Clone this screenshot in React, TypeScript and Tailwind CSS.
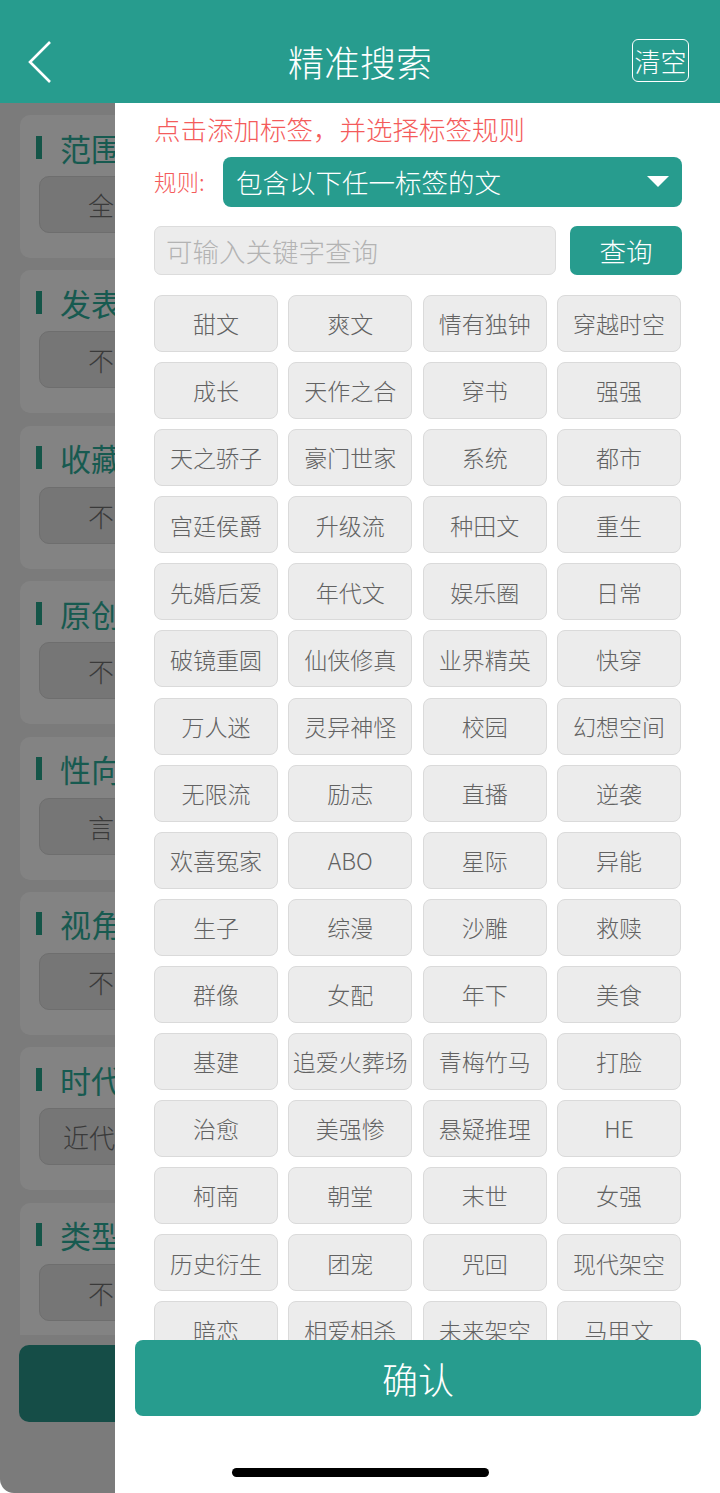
const tags = [
  "甜文", "爽文", "情有独钟", "穿越时空",
  "成长", "天作之合", "穿书", "强强",
  "天之骄子", "豪门世家", "系统", "都市",
  "宫廷侯爵", "升级流", "种田文", "重生",
  "先婚后爱", "年代文", "娱乐圈", "日常",
  "破镜重圆", "仙侠修真", "业界精英", "快穿",
  "万人迷", "灵异神怪", "校园", "幻想空间",
  "无限流", "励志", "直播", "逆袭",
  "欢喜冤家", "ABO", "星际", "异能",
  "生子", "综漫", "沙雕", "救赎",
  "群像", "女配", "年下", "美食",
  "基建", "追爱火葬场", "青梅竹马", "打脸",
  "治愈", "美强惨", "悬疑推理", "HE",
  "柯南", "朝堂", "末世", "女强",
  "历史衍生", "团宠", "咒回", "现代架空",
  "暗恋", "相爱相杀", "未来架空", "马甲文",
];

const sections = [
  { title: "范围", value: "全" },
  { title: "发表", value: "不" },
  { title: "收藏", value: "不" },
  { title: "原创", value: "不" },
  { title: "性向", value: "言" },
  { title: "视角", value: "不" },
  { title: "时代", value: "近代", left: true },
  { title: "类型", value: "不" },
];

const font = { fontFamily: '"Noto Sans CJK SC", "Noto Sans", sans-serif' };

function BehindPage() {
  return (
    <div className="w-[115px] shrink-0 overflow-hidden bg-[#7b7b7b] rounded-bl-[14px] flex flex-col pt-[12px]">
      <div className="h-[1220px] overflow-hidden">
        <div className="ml-[20px] w-[680px] flex flex-col gap-[12.4px]">
          {sections.map((s) => (
            <div key={s.title} className="h-[143px] shrink-0 rounded-[10px] bg-[#838383] pt-[15px]">
              <div className="flex items-center h-[34px]">
                <span className="ml-[16px] w-[6px] h-[23px] bg-[#145548]" />
                <span className="ml-[18px] text-[31px] leading-none font-normal text-[#175a50]">{s.title}</span>
              </div>
              <div
                className={
                  s.left
                    ? "ml-[19px] mt-[12px] w-[124px] h-[57px] rounded-[10px] bg-[#767676] border border-[#6e6e6e] flex items-center pl-[23px] text-[26px] text-[#3a3a3a]"
                    : "ml-[19px] mt-[12px] w-[124px] h-[57px] rounded-[10px] bg-[#767676] border border-[#6e6e6e] flex items-center justify-center text-[26px] text-[#3a3a3a]"
                }
              >
                {s.value}
              </div>
            </div>
          ))}
        </div>
      </div>
      <div className="mt-[10px] ml-[19px] w-[680px] h-[77px] rounded-[10px] bg-[#154d47]" />
    </div>
  );
}

function Drawer() {
  return (
    <div className="flex-1 bg-white flex flex-col">
      <div className="pl-[39px] pr-[38px]">
        <p className="mt-[9px] text-[26.5px] leading-[34px] text-[#f45b5b]">点击添加标签，并选择标签规则</p>
        <div className="mt-[11px] flex items-center">
          <span className="w-[69px] text-[22.5px] text-[#f45b5b]">规则:</span>
          <div className="flex-1 h-[50px] rounded-[8px] bg-[#279c8e] flex items-center justify-between pl-[13px] pr-[13px]">
            <span className="text-[26.5px] text-white">包含以下任一标签的文</span>
            <svg width="22" height="12" viewBox="0 0 22 12">
              <path d="M0 0 L22 0 L11 11 Z" fill="white" />
            </svg>
          </div>
        </div>
        <div className="mt-[19px] flex items-center gap-[14px]">
          <div className="w-[402px] h-[49px] rounded-[7px] bg-[#ececec] border-[1.5px] border-[#dcdcdc] flex items-center pl-[11px] text-[26.5px] text-[#b3b3b3]">
            可输入关键字查询
          </div>
          <button className="w-[112px] h-[49px] rounded-[7px] bg-[#279c8e] text-[26.5px] text-white">查询</button>
        </div>
      </div>
      <div className="mt-[20px] h-[1045px] overflow-hidden pl-[39px]">
        <div className="w-[527px] grid grid-cols-4 gap-x-[10.3px] gap-y-[10.1px]">
          {tags.map((t) => (
            <div
              key={t}
              className="h-[57px] rounded-[8px] bg-[#ececec] border-[1.5px] border-[#dadada] flex items-center justify-center text-[23px] text-[#626262]"
            >
              {t}
            </div>
          ))}
        </div>
      </div>
      <button className="ml-[20px] w-[566px] h-[76px] rounded-[8px] bg-[#279c8e] text-[36px] text-white">确认</button>
    </div>
  );
}

export default function App() {
  return (
    <div className="relative w-[720px] h-[1493px] overflow-hidden bg-white font-light" style={font}>
      <header className="h-[103px] bg-[#279c8e] flex items-center px-[28px] pt-[18px]">
        <div className="w-[100px]">
          <svg width="24" height="42" viewBox="0 0 24 42" className="mt-[3px]">
            <path d="M22 1 L2 21 L22 41" stroke="white" strokeWidth="2.6" fill="none" />
          </svg>
        </div>
        <h1 className="flex-1 text-center text-[36px] text-white">精准搜索</h1>
        <div className="w-[100px] flex justify-end">
          <div className="mr-[3px] w-[57px] h-[43px] rounded-[6px] border border-white flex items-center justify-center text-[26px] text-white">
            清空
          </div>
        </div>
      </header>
      <div className="flex h-[1390px]">
        <BehindPage />
        <Drawer />
      </div>
      <div className="absolute left-[232px] top-[1468px] w-[257px] h-[9px] rounded-full bg-black" />
    </div>
  );
}
